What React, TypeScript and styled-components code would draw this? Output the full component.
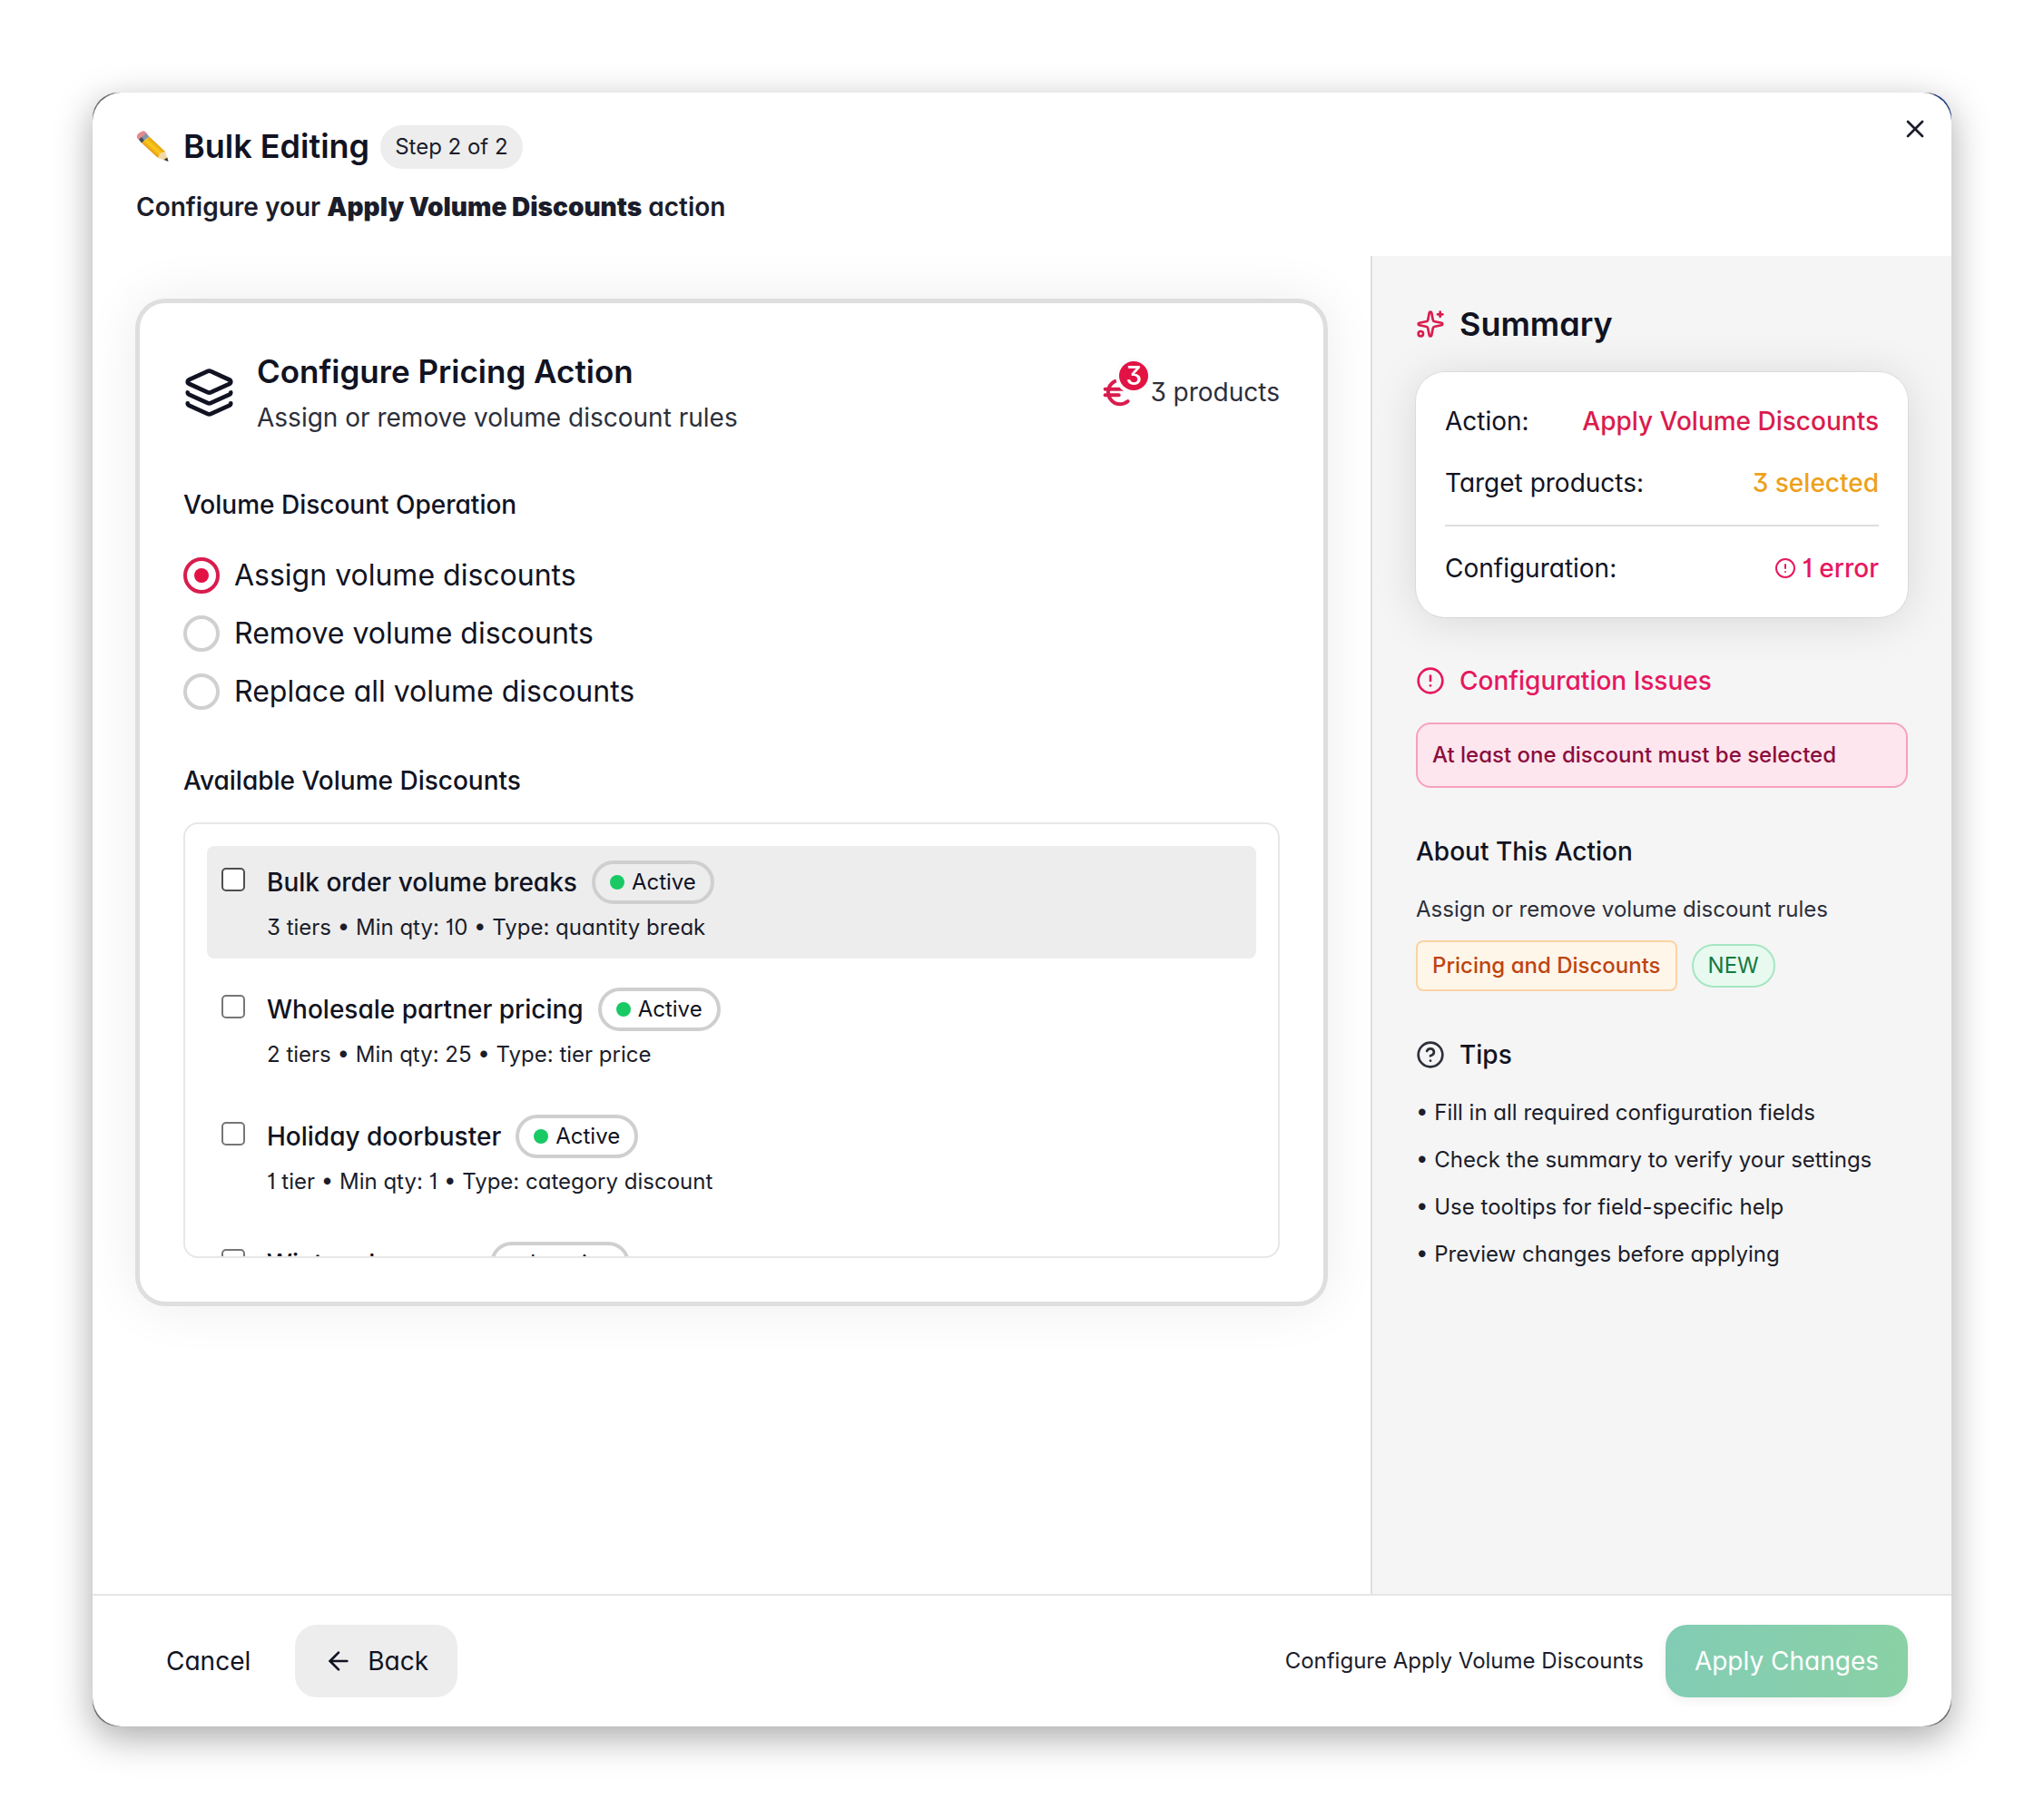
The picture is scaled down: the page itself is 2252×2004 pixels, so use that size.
import React, { useState } from "react";
import styled, { createGlobalStyle } from "styled-components";
import { ArrowLeft, CircleAlert, CircleHelp, Euro, Layers, Sparkles, X } from "lucide-react";

const color = {
  ink: "#111322",
  body: "#1b1d2b",
  soft: "#2d2f3a",
  muted: "#ededed",
  panel: "#f5f5f5",
  line: "#dedede",
  primary: "#d91c4e",
  danger: "#e6185f",
  warning: "#eda11b",
};

const GlobalStyle = createGlobalStyle`
  *, *::before, *::after { box-sizing: border-box; }
  body {
    margin: 0;
    background: #ffffff;
    color: ${color.ink};
    font-family: Inter, "Liberation Sans", sans-serif;
    font-feature-settings: "cv01", "cv09", "cv11";
    font-size: 28px;
    line-height: 44px;
    -webkit-font-smoothing: antialiased;
  }
  h1, h2, h3, p, ul, fieldset { margin: 0; padding: 0; border: 0; }
  button, input { font: inherit; font-feature-settings: inherit; color: inherit; margin: 0; }
`;

const Page = styled.div`
  display: flex;
  min-height: 100vh;
  padding: 102px;
`;

const Backdrop = styled.div`
  display: flex;
  flex: 1;
  min-width: 0;
  border-radius: 28px;
  background:
    linear-gradient(#1a3a78, #1a3a78) top right / 20px 50% no-repeat,
    #6c6c6c;
  box-shadow: 0 12px 40px rgba(0, 0, 0, 0.34);
`;

const Dialog = styled.div`
  position: relative;
  display: flex;
  flex: 1;
  flex-direction: column;
  min-width: 0;
  overflow: hidden;
  border-radius: 32px;
  background: #ffffff;
`;

const Header = styled.header`
  display: flex;
  flex-direction: column;
  gap: 16px;
  padding: 32px 48px;
`;

const TitleRow = styled.div`
  display: flex;
  align-items: center;
  gap: 12px;
`;

const Title = styled.h1`
  display: flex;
  align-items: center;
  gap: 16px;
  padding-bottom: 2px;
  font-size: 36px;
  font-weight: 600;
  line-height: 54px;
`;

const StepBadge = styled.span`
  padding: 6px 16px;
  border-radius: 24px;
  background: ${color.muted};
  color: ${color.body};
  font-size: 24px;
  line-height: 36px;
`;

const Subtitle = styled.p`
  color: ${color.body};
  font-weight: 600;

  strong { font-weight: 900; }
`;

const CloseButton = styled.button`
  position: absolute;
  top: 24px;
  right: 24px;
  display: flex;
  padding: 0;
  border: 0;
  background: none;
  color: ${color.body};
  cursor: pointer;
`;

const Body = styled.div`
  display: grid;
  flex: 1;
  grid-template-columns: minmax(0, 1fr) 640px;
`;

const Main = styled.main`
  padding: 48px;
`;

const ActionCard = styled.section`
  display: flex;
  flex-direction: column;
  gap: 52px;
  padding: 48px;
  border: 4px solid ${color.line};
  border-radius: 32px;
  background: #ffffff;
  box-shadow: 0 0 0 1px ${color.line}, 0 0 60px rgba(0, 0, 0, 0.08);
`;

const CardHeader = styled.div`
  display: flex;
  align-items: center;
  gap: 24px;
`;

const CardHeading = styled.div`
  flex: 1;
`;

const Heading = styled.h2<{ $compact?: boolean }>`
  display: flex;
  align-items: center;
  gap: 16px;
  padding-bottom: 2px;
  font-size: ${(p) => (p.$compact ? "35px" : "36px")};
  font-weight: 600;
  line-height: 54px;
`;

const Description = styled.p<{ $small?: boolean }>`
  color: ${color.soft};
  font-size: ${(p) => (p.$small ? "24px" : "28px")};
  line-height: ${(p) => (p.$small ? "36px" : "44px")};
`;

const ProductCount = styled.div`
  display: flex;
  align-items: center;
  gap: 16px;
  color: ${color.soft};
`;

const CountIcon = styled.span`
  position: relative;
  display: flex;
  color: ${color.primary};
`;

const CountBadge = styled.span`
  position: absolute;
  top: -14px;
  right: -14px;
  width: 32px;
  height: 32px;
  border-radius: 50%;
  background: #e31245;
  box-shadow: 0 0 0 4px #fcfcfc;
  color: #ffffff;
  font-weight: 500;
  line-height: 32px;
  text-align: center;
`;

const Form = styled.div`
  display: flex;
  flex-direction: column;
  gap: 56px;
`;

const RadioGroup = styled.fieldset`
  display: flex;
  flex-direction: column;
  gap: 24px;
  min-width: 0;
`;

const Legend = styled.legend`
  padding: 0 0 36px;
  font-weight: 500;
`;

const RadioLabel = styled.label`
  display: flex;
  align-items: center;
  align-self: flex-start;
  gap: 16px;
  font-size: 32px;
  line-height: 40px;
  cursor: pointer;
`;

const Radio = styled.input`
  display: grid;
  width: 40px;
  height: 40px;
  border: 4px solid #d0d0d0;
  border-radius: 50%;
  background: #ffffff;
  appearance: none;
  place-content: center;

  &:checked { border-color: ${color.primary}; }
  &:checked::before {
    width: 16px;
    height: 16px;
    border-radius: 50%;
    background: #e31245;
    content: "";
  }
`;

const Discounts = styled.section`
  display: flex;
  flex-direction: column;
  gap: 24px;
`;

const ListLabel = styled.h3`
  font-size: 28px;
  font-weight: 500;
`;

const DiscountList = styled.div`
  display: flex;
  flex-direction: column;
  gap: 16px;
  height: 480px;
  padding: 24px;
  overflow-y: auto;
  border: 2px solid #e7e7e7;
  border-radius: 16px;
  scrollbar-width: none;
`;

const DiscountRow = styled.label<{ $highlighted?: boolean }>`
  display: flex;
  flex-shrink: 0;
  align-items: flex-start;
  gap: 24px;
  padding: 16px;
  border-radius: 8px;
  background: ${(p) => (p.$highlighted ? color.muted : "transparent")};
  cursor: pointer;
`;

const Checkbox = styled.input<{ $highlighted?: boolean }>`
  width: 26px;
  height: 26px;
  margin-top: 8px;
  border: 2px solid ${(p) => (p.$highlighted ? "#4f4f4f" : "#767676")};
  border-radius: 5px;
  background: #ffffff;
  appearance: none;

  &:checked { background: ${color.primary}; }
`;

const DiscountInfo = styled.span`
  display: flex;
  flex-direction: column;
  gap: 8px;
`;

const DiscountTitle = styled.span`
  display: flex;
  align-items: center;
  gap: 16px;
  font-weight: 500;
`;

const StatusBadge = styled.span`
  display: flex;
  align-items: center;
  gap: 8px;
  padding: 0 16px;
  border: 4px solid #cfcfcf;
  border-radius: 24px;
  font-size: 24px;
  font-weight: 400;
  line-height: 40px;
`;

const StatusDot = styled.span<{ $active: boolean }>`
  width: 16px;
  height: 16px;
  border-radius: 50%;
  background: ${(p) => (p.$active ? "#19c964" : "#a3a3a3")};
`;

const Meta = styled.span`
  color: ${color.body};
  font-size: 24px;
  line-height: 36px;
`;

const Sidebar = styled.aside`
  display: flex;
  flex-direction: column;
  gap: 48px;
  padding: 48px;
  border-left: 2px solid ${color.line};
  background: ${color.panel};
`;

const Block = styled.section`
  display: flex;
  flex-direction: column;
  gap: 24px;
`;

const BlockTitle = styled.h3<{ $danger?: boolean }>`
  display: flex;
  align-items: center;
  gap: 16px;
  color: ${(p) => (p.$danger ? color.danger : color.ink)};
  font-size: 28px;
  font-weight: 500;
`;

const SummaryCard = styled.div`
  display: flex;
  flex-direction: column;
  gap: 24px;
  padding: 32px;
  border-radius: 32px;
  background: #ffffff;
  box-shadow: 0 0 0 1px rgba(0, 0, 0, 0.06), 0 4px 50px rgba(0, 0, 0, 0.12);
`;

const SummaryRow = styled.div`
  display: flex;
  align-items: center;
  justify-content: space-between;
`;

const SummaryValue = styled.span<{ $tone: string }>`
  display: flex;
  align-items: center;
  gap: 6px;
  color: ${(p) => p.$tone};
  font-weight: 500;
`;

const Rule = styled.hr`
  width: 100%;
  height: 2px;
  margin: 0;
  border: 0;
  background: ${color.line};
`;

const Issue = styled.p`
  padding: 16px;
  border: 2px solid #f7a1bd;
  border-radius: 16px;
  background: #fde6ee;
  color: #8c0d3c;
  font-size: 24px;
  font-weight: 500;
  line-height: 36px;
`;

const About = styled.div`
  display: flex;
  flex-direction: column;
  gap: 16px;
`;

const Tags = styled.div`
  display: flex;
  align-items: center;
  gap: 16px;
`;

const CategoryTag = styled.span`
  padding: 8px 16px;
  border: 2px solid #fad3a4;
  border-radius: 8px;
  background: #fff6ea;
  color: #bd450f;
  font-size: 24px;
  font-weight: 500;
  line-height: 36px;
`;

const NewTag = styled.span`
  padding: 4px 16px;
  border: 2px solid #a5e6c3;
  border-radius: 24px;
  background: #e8faf0;
  color: #157a40;
  font-size: 24px;
  line-height: 36px;
`;

const Tips = styled.ul`
  display: flex;
  flex-direction: column;
  gap: 16px;
  list-style: none;
  color: ${color.body};
  font-size: 24px;
  line-height: 36px;
`;

const Footer = styled.footer`
  display: flex;
  align-items: center;
  justify-content: space-between;
  padding: 32px 48px;
  border-top: 2px solid #e5e5e5;
`;

const FooterGroup = styled.div<{ $gap: number }>`
  display: flex;
  align-items: center;
  gap: ${(p) => p.$gap}px;
`;

const FooterNote = styled.span`
  color: ${color.body};
  font-size: 24px;
`;

const Button = styled.button<{ $variant: "ghost" | "muted" | "apply" }>`
  display: flex;
  align-items: center;
  gap: 16px;
  height: 80px;
  padding: 0 32px;
  border: ${(p) => (p.$variant === "ghost" ? "1px solid transparent" : "0")};
  border-radius: 24px;
  background: ${(p) =>
    p.$variant === "apply"
      ? "linear-gradient(to right, #82ccb5, #8ad1a5)"
      : p.$variant === "muted"
        ? color.muted
        : "transparent"};
  box-shadow: ${(p) => (p.$variant === "apply" ? "0 4px 12px rgba(0, 0, 0, 0.06)" : "none")};
  color: ${(p) => (p.$variant === "apply" ? "#ffffff" : color.ink)};
  font-weight: 400;
  cursor: pointer;
`;

function Pencil() {
  return (
    <svg width="36" height="36" viewBox="0 0 36 36" aria-hidden="true">
      <defs>
        <linearGradient id="wood" x1="0" y1="1" x2="1" y2="0">
          <stop offset="0.35" stopColor="#e79a12" />
          <stop offset="0.5" stopColor="#fbc91d" />
          <stop offset="0.65" stopColor="#e5a40f" />
        </linearGradient>
      </defs>
      <path d="M1 9 Q0 5 4 3 Q8 0 10 2 L13 5.500 L4.500 12.500 Z" fill="#e58a90" />
      <path d="M3 10.500 L11 4 L14.500 7.500 L6 14.500 Z" fill="#8196a8" />
      <path d="M3 10.500 L6 8 L9 12 L6 14.500 Z" fill="#454e58" />
      <path d="M6 14.500 L14.500 7.500 L32 24 L24 31 Z" fill="url(#wood)" />
      <path d="M24 31 L26 26 L32 24 L35.500 35 Z" fill="#f3d9a4" />
      <path d="M30.500 33 L34.300 30.500 L35.500 35 Z" fill="#3a3a3a" />
    </svg>
  );
}

const operations = [
  { value: "assign", label: "Assign volume discounts" },
  { value: "remove", label: "Remove volume discounts" },
  { value: "replace", label: "Replace all volume discounts" },
];

const discounts = [
  { name: "Bulk order volume breaks", active: true, meta: "3 tiers • Min qty: 10 • Type: quantity break" },
  { name: "Wholesale partner pricing", active: true, meta: "2 tiers • Min qty: 25 • Type: tier price" },
  { name: "Holiday doorbuster", active: true, meta: "1 tier • Min qty: 1 • Type: category discount" },
  { name: "Winter clearance", active: false, meta: "2 tiers • Min qty: 5 • Type: tier price" },
];

const tips = [
  "Fill in all required configuration fields",
  "Check the summary to verify your settings",
  "Use tooltips for field-specific help",
  "Preview changes before applying",
];

export default function App() {
  const [operation, setOperation] = useState("assign");

  return (
    <Page>
      <GlobalStyle />
      <Backdrop>
        <Dialog role="dialog" aria-labelledby="dialog-title">
          <Header>
            <TitleRow>
              <Title id="dialog-title">
                <Pencil />
                Bulk Editing
              </Title>
              <StepBadge>Step 2 of 2</StepBadge>
            </TitleRow>
            <Subtitle>
              Configure your <strong>Apply Volume Discounts</strong> action
            </Subtitle>
            <CloseButton type="button" aria-label="Close">
              <X size={32} />
            </CloseButton>
          </Header>

          <Body>
            <Main>
              <ActionCard>
                <CardHeader>
                  <Layers size={57} />
                  <CardHeading>
                    <Heading $compact>Configure Pricing Action</Heading>
                    <Description>Assign or remove volume discount rules</Description>
                  </CardHeading>
                  <ProductCount>
                    <CountIcon>
                      <Euro size={40} strokeWidth={2.4} />
                      <CountBadge>3</CountBadge>
                    </CountIcon>
                    3 products
                  </ProductCount>
                </CardHeader>

                <Form>
                  <RadioGroup>
                    <Legend>Volume Discount Operation</Legend>
                    {operations.map((o) => (
                      <RadioLabel key={o.value}>
                        <Radio
                          type="radio"
                          name="operation"
                          value={o.value}
                          checked={operation === o.value}
                          onChange={() => setOperation(o.value)}
                        />
                        {o.label}
                      </RadioLabel>
                    ))}
                  </RadioGroup>

                  <Discounts>
                    <ListLabel>Available Volume Discounts</ListLabel>
                    <DiscountList>
                      {discounts.map((d, i) => (
                        <DiscountRow key={d.name} $highlighted={i === 0}>
                          <Checkbox type="checkbox" $highlighted={i === 0} />
                          <DiscountInfo>
                            <DiscountTitle>
                              {d.name}
                              <StatusBadge>
                                <StatusDot $active={d.active} />
                                {d.active ? "Active" : "Inactive"}
                              </StatusBadge>
                            </DiscountTitle>
                            <Meta>{d.meta}</Meta>
                          </DiscountInfo>
                        </DiscountRow>
                      ))}
                    </DiscountList>
                  </Discounts>
                </Form>
              </ActionCard>
            </Main>

            <Sidebar>
              <Block>
                <Heading>
                  <Sparkles size={32} color={color.primary} />
                  Summary
                </Heading>
                <SummaryCard>
                  <SummaryRow>
                    <span>Action:</span>
                    <SummaryValue $tone={color.primary}>Apply Volume Discounts</SummaryValue>
                  </SummaryRow>
                  <SummaryRow>
                    <span>Target products:</span>
                    <SummaryValue $tone={color.warning}>3 selected</SummaryValue>
                  </SummaryRow>
                  <Rule />
                  <SummaryRow>
                    <span>Configuration:</span>
                    <SummaryValue $tone={color.danger}>
                      <CircleAlert size={24} />1 error
                    </SummaryValue>
                  </SummaryRow>
                </SummaryCard>
              </Block>

              <Block>
                <BlockTitle $danger>
                  <CircleAlert size={32} />
                  Configuration Issues
                </BlockTitle>
                <Issue>At least one discount must be selected</Issue>
              </Block>

              <Block>
                <BlockTitle>About This Action</BlockTitle>
                <About>
                  <Description $small>Assign or remove volume discount rules</Description>
                  <Tags>
                    <CategoryTag>Pricing and Discounts</CategoryTag>
                    <NewTag>NEW</NewTag>
                  </Tags>
                </About>
              </Block>

              <Block>
                <BlockTitle>
                  <CircleHelp size={32} color={color.soft} />
                  Tips
                </BlockTitle>
                <Tips>
                  {tips.map((t) => (
                    <li key={t}>• {t}</li>
                  ))}
                </Tips>
              </Block>
            </Sidebar>
          </Body>

          <Footer>
            <FooterGroup $gap={16}>
              <Button type="button" $variant="ghost">
                Cancel
              </Button>
              <Button type="button" $variant="muted">
                <ArrowLeft size={32} />
                Back
              </Button>
            </FooterGroup>
            <FooterGroup $gap={24}>
              <FooterNote>Configure Apply Volume Discounts</FooterNote>
              <Button type="button" $variant="apply">
                Apply Changes
              </Button>
            </FooterGroup>
          </Footer>
        </Dialog>
      </Backdrop>
    </Page>
  );
}
